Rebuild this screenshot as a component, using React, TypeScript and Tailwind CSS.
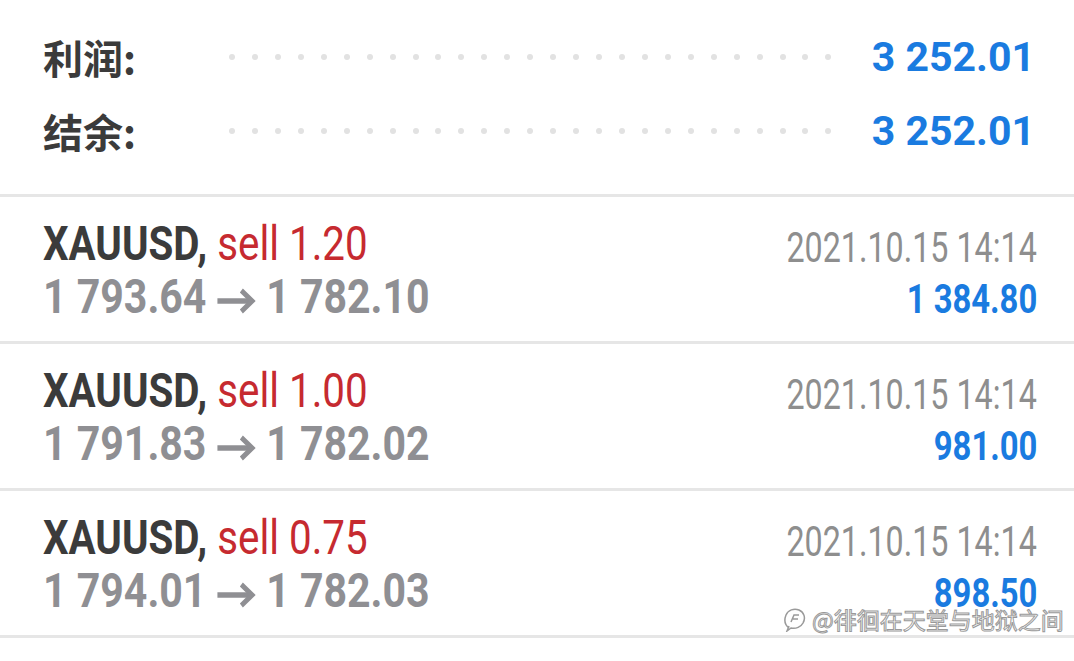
import React from "react";

const summary = [
  { label: "利润:", value: "3 252.01" },
  { label: "结余:", value: "3 252.01" },
];

const deals = [
  { lot: "1.20", open: "1 793.64", close: "1 782.10", time: "2021.10.15 14:14", profit: "1 384.80" },
  { lot: "1.00", open: "1 791.83", close: "1 782.02", time: "2021.10.15 14:14", profit: "981.00" },
  { lot: "0.75", open: "1 794.01", close: "1 782.03", time: "2021.10.15 14:14", profit: "898.50" },
];

function Dots() {
  return (
    <div className="flex flex-1 justify-between">
      {Array.from({ length: 27 }).map((_, i) => (
        <span key={i} className="block w-[6px] h-[6px] rounded-full bg-[#e2e2e2]" />
      ))}
    </div>
  );
}

function Arrow() {
  return (
    <svg width="46" height="26" viewBox="0 0 46 26" className="inline-block mx-[12px] align-[-1px]" fill="none" stroke="#8f8f93" strokeWidth="5.5" strokeLinecap="butt">
      <path d="M1 13 H41" />
      <path d="M29 2.5 L41.5 13 L29 23.5" strokeLinejoin="miter" />
    </svg>
  );
}

export default function App() {
  return (
    <div className="relative w-[1074px] h-[661px] bg-white overflow-hidden [font-family:Roboto,sans-serif]">
      <div className="h-[197px] pt-[20px] pl-[43px] pr-[39px] border-b-[3px] border-[#e6e6e6]">
        {summary.map((s) => (
          <div key={s.label} className="flex items-center h-[74px]">
            <div className="w-[186px] text-[40px] font-bold text-[#3b3b3b] leading-none [font-family:'Noto_Sans_CJK_SC',sans-serif]">
              {s.label}
            </div>
            <Dots />
            <div className="ml-[40px] text-[41px] font-bold text-[#1a7be0] leading-none">
              {s.value}
            </div>
          </div>
        ))}
      </div>
      {deals.map((d, i) => (
        <div key={i} className="h-[147px] pl-[43px] pr-[37px] pt-[21px] border-b-[3px] border-[#e6e6e6]">
          <div className="flex justify-between items-baseline leading-[52px]">
            <div className="text-[48px] whitespace-nowrap inline-block origin-left scale-x-[0.84]">
              <span className="font-bold text-[#3b3b3b]">XAUUSD,</span>
              <span className="text-[#c62a30]"> sell {d.lot}</span>
            </div>
            <div className="text-[43px] text-[#8e8e8e] whitespace-nowrap inline-block origin-right scale-x-[0.75] translate-y-[2px]">{d.time}</div>
          </div>
          <div className="flex justify-between items-baseline leading-[52px]">
            <div className="text-[48px] font-bold text-[#8f8f93] whitespace-nowrap inline-block origin-left scale-x-[0.855]">
              {d.open}
              <Arrow />
              {d.close}
            </div>
            <div className="text-[40px] font-bold text-[#1a7be0] whitespace-nowrap inline-block origin-right scale-x-[0.82]">{d.profit}</div>
          </div>
        </div>
      ))}
      <div className="absolute left-[783px] top-[606px] flex items-center gap-[5px] whitespace-nowrap">
        <svg width="24" height="26" viewBox="0 0 24 26" fill="none" stroke="#9a9a9a" strokeWidth="1.5">
          <path d="M6 22 C2 19 1 14 3 9 C5 4 11 2 16 4 C21 6 23 12 20 17" />
          <path d="M20 17 C18 21 13 23 8 22 L4 25 L6 20" />
          <path d="M8 16 L11 9 L16 9 M10 13 L15 13" />
        </svg>
        <span className="text-[23px] leading-none text-white [-webkit-text-stroke:1px_#999] [font-family:'Noto_Sans_CJK_SC',sans-serif]">
          @徘徊在天堂与地狱之间
        </span>
      </div>
    </div>
  );
}
